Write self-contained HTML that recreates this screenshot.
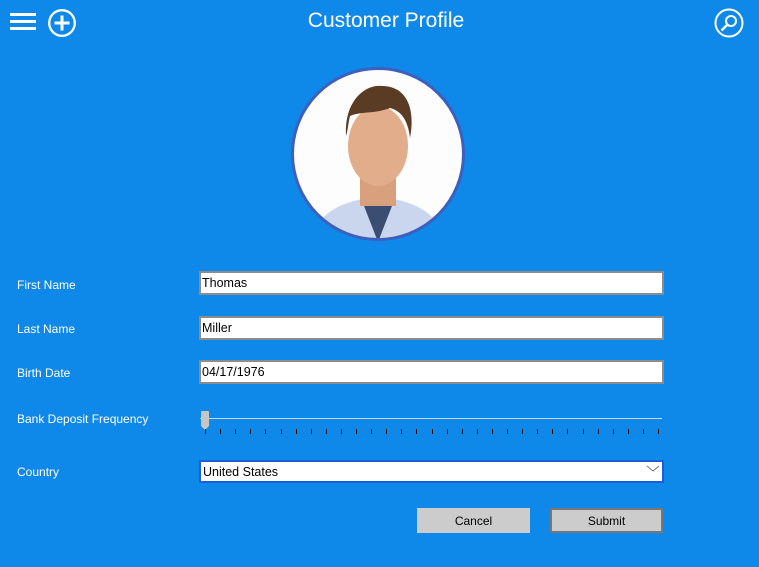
<!DOCTYPE html>
<html><head><style>
body{margin:0;width:759px;height:567px;background:#0f89e9;font-family:"Liberation Sans",sans-serif;position:relative;overflow:hidden}
.a{position:absolute}
.lbl{position:absolute;left:17px;color:#fff;font-size:12px}
.inp{position:absolute;left:199px;width:460px;height:20px;background:#fff;border:2px solid #8c8c8c;font-size:12.5px;line-height:21px;padding-left:1px;box-sizing:content-box;color:#000}
.tick{position:absolute;top:429px;width:1px;height:5px;background:#111}
</style></head><body>
<svg class="a" style="left:10px;top:12px" width="27" height="20"><rect x="0" y="1" width="26" height="3" fill="#fff"/><rect x="0" y="8" width="26" height="3" fill="#fff"/><rect x="0" y="15" width="26" height="3" fill="#fff"/></svg>
<svg class="a" style="left:47px;top:8px" width="30" height="30"><circle cx="15" cy="15" r="12.8" fill="none" stroke="#fff" stroke-width="2.3"/><path d="M15 7.5V22.5M7.5 15H22.5" stroke="#fff" stroke-width="3"/></svg>
<div class="a" style="left:0;width:772px;top:9px;text-align:center;color:#fff;font-size:21px">Customer Profile</div>
<svg class="a" style="left:713px;top:8px" width="32" height="32"><circle cx="16" cy="15" r="13.5" fill="none" stroke="#fff" stroke-width="2"/><circle cx="18" cy="13" r="5" fill="none" stroke="#fff" stroke-width="2"/><path d="M14.5 16.5L8.5 22.5" stroke="#fff" stroke-width="2.5"/></svg>
<svg class="a" style="left:290px;top:66px" width="176" height="176">
<defs><clipPath id="c"><circle cx="88" cy="88" r="85"/></clipPath></defs>
<circle cx="88" cy="88" r="85" fill="#fdfdfd"/>
<g clip-path="url(#c)">
<path d="M20 176 C30 140 60 135 88 130 C116 135 146 140 156 176Z" fill="#c9d6ee"/>
<path d="M74 140 L88 176 L102 140 Z" fill="#3b4e72"/>
<rect x="70" y="100" width="36" height="40" fill="#d9a07e"/>
<ellipse cx="88" cy="80" rx="30" ry="40" fill="#e2ad8a"/>
<path d="M56 70 C54 35 75 18 92 20 C115 20 126 40 120 72 C118 55 112 45 100 42 C85 48 70 45 60 50 C58 58 58 64 56 70Z" fill="#5a3b24"/>
</g>
<circle cx="88" cy="88" r="85.5" fill="none" stroke="#3d5fbd" stroke-width="3"/>
</svg>
<div class="lbl" style="top:278px">First Name</div>
<div class="lbl" style="top:322px">Last Name</div>
<div class="lbl" style="top:366px">Birth Date</div>
<div class="lbl" style="top:412px">Bank Deposit Frequency</div>
<div class="lbl" style="top:465px">Country</div>
<div class="inp" style="top:271px">Thomas</div>
<div class="inp" style="top:316px">Miller</div>
<div class="inp" style="top:360px">04/17/1976</div>
<div class="a" style="left:200px;top:418px;width:462px;height:1px;background:#c8d8e8"></div>
<svg class="a" style="left:200px;top:410px" width="10" height="22"><path d="M1 2Q1 1 2 1H8Q9 1 9 2V16L5 20L1 16Z" fill="#c6c6c6"/></svg>
<div id="t"></div>
<script>
var h='';for(var i=0;i<31;i++){h+='<div class="tick" style="left:'+Math.round(205+i*15.1)+'px"></div>'}document.getElementById('t').innerHTML=h;
</script>
<div class="a" style="left:199px;top:460px;width:461px;height:19px;background:#fff;border:2px solid #1a5fd8;box-sizing:content-box"></div>
<div class="a" style="left:203px;top:462px;font-size:12.5px;line-height:20px">United States</div>
<svg class="a" style="left:646px;top:465px" width="14" height="8"><path d="M1 1L7 6L13 1" fill="none" stroke="#777" stroke-width="1"/></svg>
<div class="a" style="left:417px;top:508px;width:113px;height:25px;background:#cccccc;font-size:12px;line-height:26px;text-align:center">Cancel</div>
<div class="a" style="left:550px;top:508px;width:109px;height:21px;background:#cccccc;border:2px solid #777;font-size:12px;line-height:22px;text-align:center">Submit</div>
</body></html>
